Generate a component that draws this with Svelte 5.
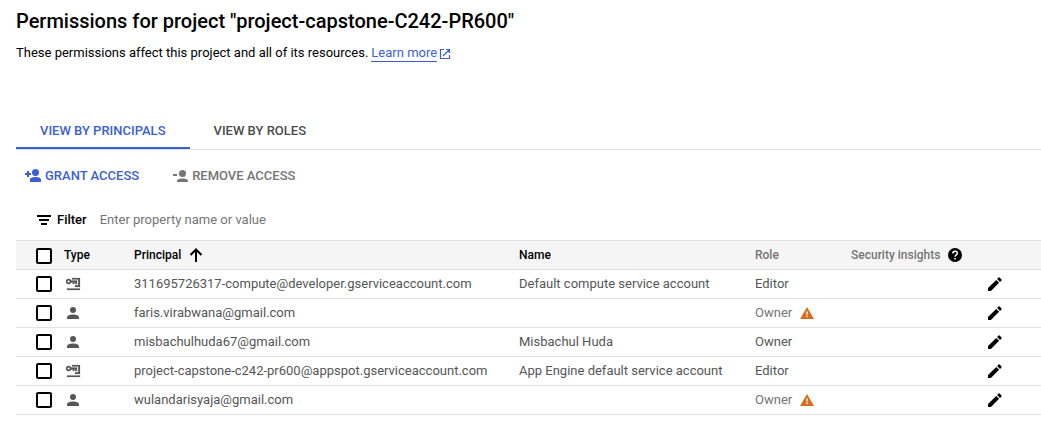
<script>
  const rows = [
    { kind: 'service', principal: '311695726317-compute@developer.gserviceaccount.com', name: 'Default compute service account', role: 'Editor', warn: false },
    { kind: 'user', principal: 'faris.virabwana@gmail.com', name: '', role: 'Owner', warn: true },
    { kind: 'user', principal: 'misbachulhuda67@gmail.com', name: 'Misbachul Huda', role: 'Owner', warn: false },
    { kind: 'service', principal: 'project-capstone-c242-pr600@appspot.gserviceaccount.com', name: 'App Engine default service account', role: 'Editor', warn: false },
    { kind: 'user', principal: 'wulandarisyaja@gmail.com', name: '', role: 'Owner', warn: true }
  ];
</script>

<main>
  <h1>Permissions for project "project-capstone-C242-PR600"</h1>
  <p class="intro">
    <span>These permissions affect this project and all of its resources.</span>
    <a href="#learn">Learn more</a>
    <svg class="external" width="12" height="12" viewBox="0 0 12 12" fill="none" stroke="currentColor" stroke-width="1.200" aria-hidden="true">
      <path d="M5 1.500H1.500v9h9V7M7 1.500h3.500V5M10.500 1.500L4 8" />
    </svg>
  </p>

  <div class="tabs" role="tablist">
    <button class="tab active" role="tab" aria-selected="true">VIEW BY PRINCIPALS</button>
    <button class="tab" role="tab" aria-selected="false">VIEW BY ROLES</button>
  </div>

  <div class="actions">
    <button class="action">
      <svg width="18" height="18" viewBox="0 0 18 18" fill="currentColor" aria-hidden="true">
        <circle cx="10.500" cy="5.500" r="3.500" />
        <path d="M5 15v-2.500c0-1.800 3.200-2.500 5.500-2.500s5.500.7 5.500 2.500V15zM2 4h2v2h2v2H4v2H2V8H0V6h2z" />
      </svg>
      GRANT ACCESS
    </button>
    <button class="action" disabled>
      <svg width="18" height="18" viewBox="0 0 18 18" fill="currentColor" aria-hidden="true">
        <circle cx="10.500" cy="6.500" r="3.500" />
        <path d="M5 15v-1c0-1.800 3.200-2.500 5.500-2.500s5.500.7 5.500 2.500v1zM1 7h4v2H1z" />
      </svg>
      REMOVE ACCESS
    </button>
  </div>

  <div class="filter">
    <svg width="14" height="10" viewBox="0 0 14 10" fill="currentColor" aria-hidden="true">
      <path d="M0 0h14v2H0zM2 4h10v2H2zM4 8h6v2H4z" />
    </svg>
    <label for="filter">Filter</label>
    <input id="filter" type="text" placeholder="Enter property name or value" />
  </div>

  <table>
    <colgroup>
      <col class="c-check" /><col class="c-type" /><col class="c-principal" /><col class="c-name" /><col class="c-role" /><col class="c-insights" /><col class="c-edit" />
    </colgroup>
    <thead>
      <tr>
        <th class="check"><input type="checkbox" aria-label="Select all principals" /></th>
        <th>Type</th>
        <th>
          <span class="inline">Principal
            <svg width="14" height="14" viewBox="0 0 14 14" fill="none" stroke="currentColor" stroke-width="2" aria-hidden="true">
              <path d="M7 14V1.500M1.500 7L7 1.500L12.500 7" />
            </svg>
          </span>
        </th>
        <th>Name</th>
        <th class="muted">Role</th>
        <th class="muted">
          <span class="inline">Security insights
            <svg width="14" height="14" viewBox="0 0 14 14" aria-hidden="true">
              <circle cx="7" cy="7" r="7" fill="#000" />
              <path d="M4.800 5.400C4.800 2.400 9.300 2.500 9.300 5.200C9.300 6.900 7 6.900 7 8.800" fill="none" stroke="#fff" stroke-width="1.500" />
              <path d="M6.200 10h1.600v1.500H6.200z" fill="#fff" />
            </svg>
          </span>
        </th>
        <th></th>
      </tr>
    </thead>
    <tbody>
      {#each rows as row}
        <tr>
          <td class="check"><input type="checkbox" aria-label={`Select ${row.principal}`} /></td>
          <td>
            {#if row.kind === 'service'}
              <svg width="18" height="14" viewBox="0 0 18 14" aria-label="Service account" role="img">
                <circle cx="4.600" cy="4.500" r="1.900" fill="none" stroke="currentColor" stroke-width="1.600" />
                <path d="M7 3.500h6v3.500h-1.700V5.500h-1V7H8.800V5.500H7zM8 1h8v9h-5V8.200h3.200V2.500H8zM3 11.500h13V13H3z" fill="currentColor" stroke="currentColor" stroke-width=".2" />
              </svg>
            {:else}
              <svg width="18" height="14" viewBox="0 0 18 14" fill="currentColor" aria-label="User" role="img">
                <circle cx="9" cy="4" r="3" />
                <path d="M3 13v-1.500C3 9.300 6.500 8.500 9 8.500s6 .8 6 3V13z" />
              </svg>
            {/if}
          </td>
          <td>{row.principal}</td>
          <td>{row.name}</td>
          <td class:muted={row.warn}>
            <span class="inline">{row.role}
              {#if row.warn}
                <svg width="14" height="12" viewBox="0 0 14 12" aria-label="Warning" role="img">
                  <path d="M7 0l7 12H0z" fill="#d56e1f" />
                  <path d="M6.300 4.500h1.400v3H6.300zM6.300 8.500h1.400V10H6.300z" fill="#fff" />
                </svg>
              {/if}
            </span>
          </td>
          <td></td>
          <td>
            <button class="edit" aria-label={`Edit ${row.principal}`}>
              <svg width="14" height="14" viewBox="0 0 14 14" fill="#000" aria-hidden="true">
                <path d="M0 11.100V14h2.900l8.200-8.200-2.900-2.900zM13.500 3.400a.8.800 0 0 0 0-1L11.600.5a.8.800 0 0 0-1 0L9.100 2l2.900 2.900z" />
              </svg>
            </button>
          </td>
        </tr>
      {/each}
    </tbody>
  </table>
</main>

<style>
  :global(body) {
    margin: 0;
    background: #fff;
  }
  main {
    padding: 8px 0 0 16px;
    font: 13px/20px Roboto, sans-serif;
    color: #000;
  }
  h1 {
    margin: 0;
    font-size: 20px;
    line-height: 26px;
    font-weight: 500;
  }
  .intro {
    display: flex;
    align-items: baseline;
    margin: 11px 0 0;
    line-height: 16px;
  }
  a {
    margin-left: 3px;
    color: #3b5fd0;
    text-decoration: none;
    border-bottom: 1px solid #3b5fd0;
  }
  .external {
    align-self: center;
    margin-left: 2px;
    color: #3b5fd0;
  }
  button {
    font: inherit;
    border: 0;
    padding: 0;
    background: none;
    color: inherit;
  }
  .tabs {
    display: flex;
    margin-top: 51px;
    border-bottom: 1px solid #e0e0e0;
  }
  .tab {
    height: 36px;
    padding: 2px 24px 0;
    border-bottom: 2px solid transparent;
    color: #4c4c4c;
    font-weight: 500;
  }
  .active {
    color: #3b5fd0;
    border-color: #3b5fd0;
  }
  .actions {
    display: flex;
    gap: 33px;
    padding: 16px 9px 0;
  }
  .action {
    display: flex;
    align-items: center;
    gap: 2px;
    color: #3b5fd0;
    font-weight: 500;
  }
  .action:disabled {
    color: #757575;
  }
  .filter {
    display: flex;
    align-items: center;
    height: 40px;
    margin-top: 14px;
    padding-left: 21px;
  }
  label {
    margin: 0 13px 0 6px;
    font-weight: 500;
  }
  .filter input {
    flex: 1;
    padding: 0;
    border: 0;
    outline: 0;
    font: inherit;
  }
  .filter input::placeholder {
    color: #757575;
  }
  table {
    width: 100%;
    table-layout: fixed;
    border-collapse: collapse;
    border-top: 1px solid #e0e0e0;
  }
  .c-check { width: 48px; }
  .c-type { width: 70px; }
  .c-principal { width: 385px; }
  .c-name { width: 236px; }
  .c-role { width: 96px; }
  .c-insights { width: 136px; }
  th,
  td {
    height: 28px;
    padding: 0;
    border-bottom: 1px solid #e0e0e0;
    text-align: left;
    white-space: nowrap;
    color: #565656;
  }
  th {
    background: #f5f5f5;
    color: #000;
    font-size: 12px;
    font-weight: 500;
  }
  .muted {
    color: #757575;
  }
  .check input {
    appearance: none;
    display: block;
    width: 16px;
    height: 16px;
    margin: 0 0 0 20px;
    border: 2px solid #000;
    border-radius: 2px;
    background: #fff;
  }
  th.check input {
    margin-top: 2px;
  }
  .edit {
    display: block;
    margin-left: 1px;
  }
  svg {
    display: block;
    flex: none;
  }
  .inline {
    display: flex;
    align-items: center;
    gap: 8px;
  }
</style>
